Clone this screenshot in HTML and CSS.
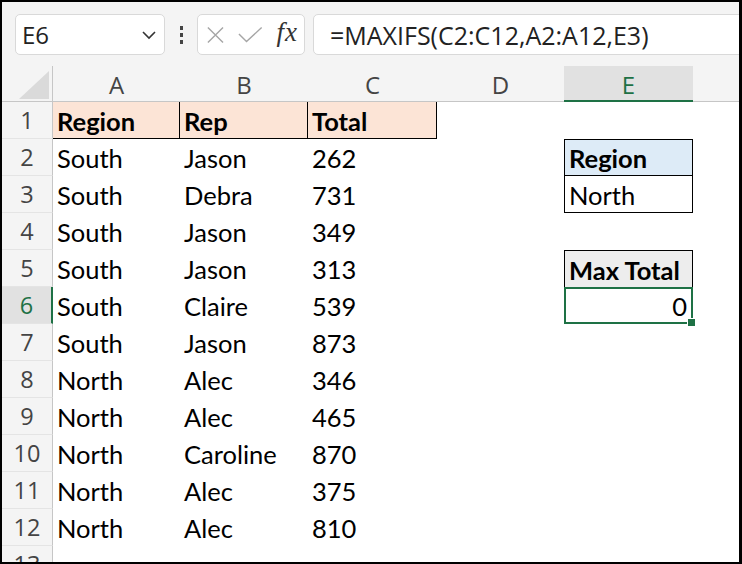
FILE: index.html
```html
<!DOCTYPE html>
<html lang="en">
<head>
    <meta charset="UTF-8">
    <title>MAXIFS</title>
    <link rel="stylesheet" href="styles.css">
</head>
<body>
    <div class="frame">
        <div class="toolbar">
            <div class="namebox">
                <span>E6</span>
                <svg class="chevron" width="16" height="10" viewBox="0 0 16 10">
                    <path d="M2 2 L8 8 L14 2" fill="none" stroke="#333" stroke-width="1.6"/>
                </svg>
            </div>
            <div class="dots"><i></i><i></i><i></i></div>
            <div class="fxbox">
                <svg width="20" height="18" viewBox="0 0 20 18">
                    <path d="M2 1 L18 17 M18 1 L2 17" stroke="#a6a6a6" stroke-width="1.5"/>
                </svg>
                <svg width="26" height="18" viewBox="0 0 26 18">
                    <path d="M1 8 L9 16 L25 1" fill="none" stroke="#a6a6a6" stroke-width="1.5"/>
                </svg>
                <span class="fx">fx</span>
            </div>
            <div class="formula">=MAXIFS(C2:C12,A2:A12,E3)</div>
        </div>

        <div class="sheet">
            <div class="corner">
                <svg width="30" height="28" viewBox="0 0 30 28"><polygon points="30,0 30,28 0,28" fill="#dadada"/></svg>
            </div>
            <div class="colhead">A</div>
            <div class="colhead">B</div>
            <div class="colhead">C</div>
            <div class="colhead">D</div>
            <div class="colhead sel">E</div>
            <div class="colhead"></div>

            <div class="rowhead">1</div>
            <div class="cell hdr">Region</div><div class="cell hdr">Rep</div><div class="cell hdr">Total</div>
            <div class="cell"></div><div class="cell"></div><div class="cell"></div>

            <div class="rowhead">2</div>
            <div class="cell">South</div><div class="cell">Jason</div><div class="cell">262</div>
            <div class="cell"></div><div class="cell crit-head">Region</div><div class="cell"></div>

            <div class="rowhead">3</div>
            <div class="cell">South</div><div class="cell">Debra</div><div class="cell">731</div>
            <div class="cell"></div><div class="cell crit">North</div><div class="cell"></div>

            <div class="rowhead">4</div>
            <div class="cell">South</div><div class="cell">Jason</div><div class="cell">349</div>
            <div class="cell"></div><div class="cell"></div><div class="cell"></div>

            <div class="rowhead">5</div>
            <div class="cell">South</div><div class="cell">Jason</div><div class="cell">313</div>
            <div class="cell"></div><div class="cell result-head">Max Total</div><div class="cell"></div>

            <div class="rowhead sel">6</div>
            <div class="cell">South</div><div class="cell">Claire</div><div class="cell">539</div>
            <div class="cell"></div><div class="cell active">0</div><div class="cell"></div>

            <div class="rowhead">7</div>
            <div class="cell">South</div><div class="cell">Jason</div><div class="cell">873</div>
            <div class="cell"></div><div class="cell"></div><div class="cell"></div>

            <div class="rowhead">8</div>
            <div class="cell">North</div><div class="cell">Alec</div><div class="cell">346</div>
            <div class="cell"></div><div class="cell"></div><div class="cell"></div>

            <div class="rowhead">9</div>
            <div class="cell">North</div><div class="cell">Alec</div><div class="cell">465</div>
            <div class="cell"></div><div class="cell"></div><div class="cell"></div>

            <div class="rowhead">10</div>
            <div class="cell">North</div><div class="cell">Caroline</div><div class="cell">870</div>
            <div class="cell"></div><div class="cell"></div><div class="cell"></div>

            <div class="rowhead">11</div>
            <div class="cell">North</div><div class="cell">Alec</div><div class="cell">375</div>
            <div class="cell"></div><div class="cell"></div><div class="cell"></div>

            <div class="rowhead">12</div>
            <div class="cell">North</div><div class="cell">Alec</div><div class="cell">810</div>
            <div class="cell"></div><div class="cell"></div><div class="cell"></div>

            <div class="rowhead">13</div>
            <div class="cell"></div><div class="cell"></div><div class="cell"></div>
            <div class="cell"></div><div class="cell"></div><div class="cell"></div>
        </div>
    </div>
</body>
</html>
```

FILE: styles.css
```css
* {
    margin: 0;
    padding: 0;
    box-sizing: border-box;
}

body {
    background: #fff;
    font-family: 'Open Sans', 'Noto Sans', sans-serif;
}

.frame {
    width: 742px;
    height: 564px;
    border: 2px solid #000;
    border-right-width: 3px;
    background: #fff;
    overflow: hidden;
    display: flex;
    flex-direction: column;
}

/* formula bar */
.toolbar {
    height: 64px;
    flex-shrink: 0;
    background: #f4f4f4;
    display: flex;
    align-items: flex-start;
    padding: 12px 0 0 13px;
}

.namebox,
.fxbox,
.formula {
    height: 41px;
    background: #fff;
    border: 1px solid #d9d9d9;
    border-radius: 5px;
    display: flex;
    align-items: center;
}

.namebox {
    width: 150px;
    padding: 0 7px 0 6px;
    justify-content: space-between;
    font-size: 24px;
    color: #222;
}

.dots {
    width: 32px;
    height: 41px;
    display: flex;
    flex-direction: column;
    align-items: center;
    justify-content: center;
    gap: 3px;
}

.dots i {
    display: block;
    width: 3px;
    height: 4px;
    background: #444;
}

.fxbox {
    width: 108px;
    padding: 0 6px 0 8px;
    gap: 13px;
}

.fx {
    font-family: 'Liberation Serif', 'DejaVu Serif', serif;
    font-style: italic;
    font-size: 27px;
    color: #333;
    letter-spacing: 1px;
    margin-left: 1px;
    margin-top: -4px;
}

.formula {
    flex: 1;
    margin-left: 8px;
    margin-right: -8px;
    padding-left: 16px;
    font-size: 25px;
    color: #222;
}

/* grid */
.sheet {
    display: grid;
    grid-template-columns: 51px 127px 128px 129px 127px 129px 1fr;
    grid-template-rows: 36px repeat(13, 37px);
    font-family: Lato, 'Open Sans', sans-serif;
    font-size: 25.5px;
    color: #000;
}

.corner {
    background: #f4f4f4;
    border-right: 1px solid #c6c6c6;
    border-bottom: 1px solid #c6c6c6;
    display: flex;
    align-items: flex-end;
    justify-content: flex-end;
    padding: 0 3px 2px 0;
}

.colhead {
    position: relative;
    background: #f4f4f4;
    border-bottom: 1px solid #c6c6c6;
    display: flex;
    align-items: center;
    justify-content: center;
    font-family: 'Open Sans', 'Noto Sans', sans-serif;
    font-size: 24px;
    color: #444;
    padding-top: 2px;
}

.colhead::after {
    content: "";
    position: absolute;
    right: -1px;
    top: 10px;
    bottom: 0;
    width: 1px;
    background: #d9d9d9;
}

.colhead.sel {
    background: #e1e1e1;
    color: #1e7145;
    border-bottom: 2px solid #1e7145;
}

.rowhead {
    background: #f4f4f4;
    border-right: 1px solid #c6c6c6;
    border-bottom: 1px solid #e4e4e4;
    display: flex;
    align-items: center;
    justify-content: center;
    font-family: 'Open Sans', 'Noto Sans', sans-serif;
    font-size: 23.5px;
    color: #444;
}

.rowhead.sel {
    background: #e1e1e1;
    color: #1e7145;
    border-right: 2px solid #1e7145;
}

.cell {
    display: flex;
    align-items: center;
    padding: 1px 4px 0;
    white-space: nowrap;
}

.cell.hdr {
    background: #fce4d6;
    font-weight: bold;
    border-right: 1px solid #000;
    border-bottom: 1px solid #000;
}

.cell.crit-head {
    background: #ddebf7;
    font-weight: bold;
    border: 1px solid #000;
}

.cell.crit {
    border: 1px solid #000;
    border-top: none;
}

.cell.result-head {
    background: #ededed;
    font-weight: bold;
    border: 1px solid #000;
    border-bottom: none;
}

.cell.active {
    position: relative;
    justify-content: flex-end;
    border: 2px solid #1e7145;
    padding-right: 4px;
}

.cell.active::after {
    content: "";
    position: absolute;
    right: -5px;
    bottom: -5px;
    width: 7px;
    height: 7px;
    background: #1e7145;
    border: 1px solid #fff;
}
```
